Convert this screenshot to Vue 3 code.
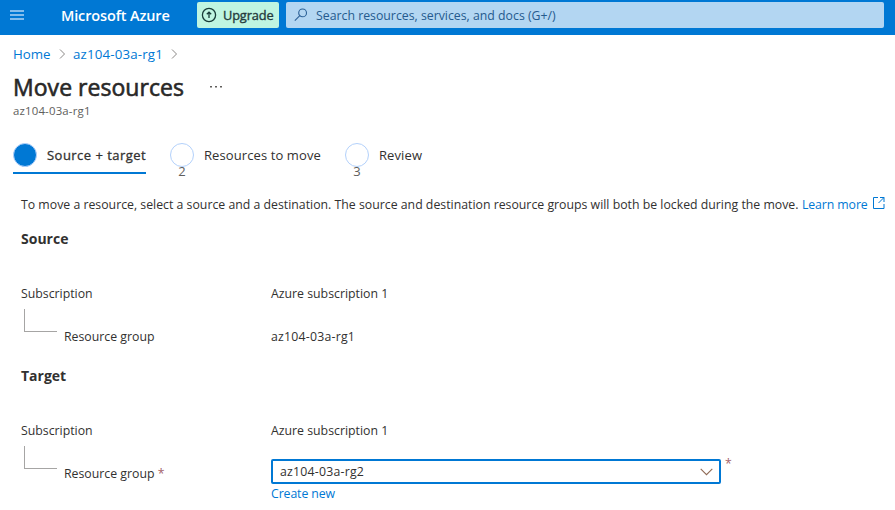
<script setup>
const steps = [
  { label: 'Source + target', number: '', active: true },
  { label: 'Resources to move', number: '2', active: false },
  { label: 'Review', number: '3', active: false },
]
</script>

<template>
  <div class="page">
    <header class="topbar">
      <svg class="menu" width="14" height="10" viewBox="0 0 14 10">
        <path d="M0 1h14M0 5h14M0 9h14" stroke="#84bdec" stroke-width="1.8" />
      </svg>
      <span class="brand">Microsoft Azure</span>
      <button class="upgrade">
        <svg width="16" height="16" viewBox="0 0 16 16" fill="none" stroke="#173b38" stroke-width="1.3">
          <circle cx="8" cy="8" r="6.6" />
          <path d="M8 11V5.5M5.8 7.300 8 5.100l2.200 2.200" />
        </svg>
        <span>Upgrade</span>
      </button>
      <div class="search">
        <svg width="14" height="14" viewBox="0 0 14 14" fill="none" stroke="#2b6096" stroke-width="1.1">
          <circle cx="8.6" cy="4.9" r="3.9" />
          <path d="M5.8 7.7.8 12.7" />
        </svg>
        <span>Search resources, services, and docs (G+/)</span>
      </div>
    </header>

    <nav class="crumbs">
      <a class="home">Home</a>
      <svg width="7" height="10" viewBox="0 0 7 10"><path d="m1 .5 4.5 4.5L1 9.5" fill="none" stroke="#8a8886" /></svg>
      <a class="group">az104-03a-rg1</a>
      <svg width="7" height="10" viewBox="0 0 7 10"><path d="m1 .5 4.5 4.5L1 9.5" fill="none" stroke="#8a8886" /></svg>
    </nav>

    <div class="heading">
      <h1>Move resources</h1>
      <svg width="12" height="3" viewBox="0 0 12 3" fill="#605e5c">
        <path d="M0 0h2v1.5H0zM5 0h2v1.5H5zM10 0h2v1.5h-2z" />
      </svg>
    </div>
    <div class="subtitle">az104-03a-rg1</div>

    <div class="steps">
      <div v-for="(s, i) in steps" :key="i" class="step" :class="['step' + i, { active: s.active }]">
        <span class="dot"><span class="number">{{ s.number }}</span></span>
        <span class="label">{{ s.label }}</span>
      </div>
    </div>

    <main>
      <p class="intro">
        <span class="sentence">To move a resource, select a source and a destination. The source and destination resource groups will both be locked during the move.</span>
        <a>Learn more</a>
        <svg width="12" height="12" viewBox="0 0 12 12" fill="none" stroke="#0078d4">
          <path d="M5 .5H.5v11h10.500V7M7 .5h4V5M11 .5 5.500 6" />
        </svg>
      </p>

      <h2>Source</h2>
      <div class="row">
        <span class="name sub">Subscription</span>
        <span class="value">Azure subscription 1</span>
      </div>
      <div class="row child">
        <span class="elbow"></span>
        <span class="name res">Resource group</span>
        <span class="value rg">az104-03a-rg1</span>
      </div>

      <h2 class="target">Target</h2>
      <div class="row">
        <span class="name sub">Subscription</span>
        <span class="value">Azure subscription 1</span>
      </div>
      <div class="row child">
        <span class="elbow"></span>
        <span class="name res">Resource group <i>*</i></span>
        <div class="field">
          <div class="select">
            <span class="rg">az104-03a-rg2</span>
            <svg width="13" height="8" viewBox="0 0 13 8"><path d="m.7.800 5.800 5.800L12.300.8" fill="none" stroke="#8f6a55" stroke-width="1.1" /></svg>
          </div>
          <a class="create">Create new</a>
        </div>
        <i class="required">*</i>
      </div>
    </main>
  </div>
</template>

<style>
body {
  background: #fff;
  overflow: hidden;
}
</style>

<style scoped>
* {
  box-sizing: border-box;
}
.page {
  width: 895px;
  height: 510px;
  overflow: hidden;
  background: #fff;
  color: #323130;
  font-family: "Open Sans", "Noto Sans", sans-serif;
  font-size: 12.3px;
  white-space: nowrap;
}
svg {
  flex: none;
  display: block;
}
a {
  color: #0078d4;
}
i {
  font-style: normal;
  color: #a4626a;
}
.topbar {
  height: 35px;
  padding: 2px 11px 7px 10px;
  display: flex;
  align-items: stretch;
  background: #0078d4;
}
.menu {
  align-self: center;
}
.brand {
  width: 136px;
  margin-left: 37px;
  color: #fff;
  font-size: 14.5px;
  font-weight: 600;
  line-height: 27px;
  letter-spacing: -0.14px;
}
.upgrade {
  width: 82px;
  height: 26px;
  padding: 0 0 0 4px;
  display: flex;
  align-items: center;
  gap: 6px;
  border: 0;
  border-radius: 2px;
  background: #bff5e1;
  color: #243a3c;
  font: 400 12.8px/26px "Open Sans", sans-serif;
  letter-spacing: -0.15px;
  -webkit-text-stroke: 0.35px currentColor;
}
.search {
  flex: 1;
  height: 26px;
  margin-left: 7px;
  padding-left: 8px;
  display: flex;
  align-items: center;
  gap: 8px;
  border-radius: 2px;
  background: #b3d6f2;
  color: #255a8e;
  font-size: 12.3px;
}
.crumbs {
  height: 37px;
  padding-left: 13px;
  display: flex;
  align-items: center;
  font-size: 13.3px;
}
.crumbs .home {
  width: 46px;
}
.crumbs .group {
  width: 98px;
  margin-left: 7px;
  letter-spacing: 0.16px;
}
.heading {
  height: 30px;
  padding-left: 13px;
  display: flex;
  align-items: center;
}
h1 {
  width: 197px;
  margin: 0;
  font-size: 23px;
  font-weight: 400;
  line-height: 30px;
  letter-spacing: 0.04px;
  color: #292827;
  -webkit-text-stroke: 0.6px currentColor;
}
.subtitle {
  height: 18px;
  padding-left: 13px;
  line-height: 18px;
  font-size: 11.4px;
  letter-spacing: 0.18px;
  color: #605e5c;
}
.steps {
  height: 54px;
  padding: 20px 0 0 13px;
  display: flex;
  gap: 24px;
  font-size: 13px;
}
.step {
  height: 34px;
  display: flex;
  gap: 10px;
}
.step0 {
  width: 133px;
  border-bottom: 2px solid #0078d4;
}
.step1 {
  width: 151px;
}
.dot {
  flex: none;
  width: 24px;
  height: 24px;
  margin-top: 3px;
  border: 1px solid #b3d1fb;
  border-radius: 50%;
  text-align: center;
  color: #605e5c;
}
.active .dot {
  background: #0078d4;
}
.number {
  display: block;
  padding-top: 17px;
  line-height: 20px;
}
.label {
  line-height: 30px;
  letter-spacing: 0.1px;
}
.active .label {
  letter-spacing: 0.47px;
  -webkit-text-stroke: 0.3px currentColor;
}
main {
  padding: 0 0 0 21px;
}
.intro {
  height: 18px;
  margin: 21px 0 0;
  display: flex;
  align-items: center;
}
.sentence {
  width: 781px;
}
.intro a {
  width: 71px;
  letter-spacing: -0.1px;
}
.intro svg {
  margin-top: -2px;
}
h2 {
  height: 20px;
  margin: 16px 0 36px;
  font-size: 14px;
  font-weight: 700;
  line-height: 20px;
}
h2.target {
  margin-top: 21px;
}
.row {
  height: 18px;
  display: flex;
  line-height: 18px;
}
.name {
  width: 250px;
}
.child {
  height: 42px;
  padding-top: 25px;
}
.elbow {
  flex: none;
  width: 33px;
  height: 23px;
  margin: -19px 7px 0 3px;
  border-left: 1px solid #a6a5a4;
  border-bottom: 1px solid #a6a5a4;
}
.child .name {
  width: 207px;
}
.rg {
  letter-spacing: 0.22px;
}
.field {
  width: 450px;
  margin-top: -6px;
}
.select {
  height: 25px;
  padding: 0 6px 0 7px;
  display: flex;
  align-items: center;
  justify-content: space-between;
  border: 2px solid #0078d4;
  border-radius: 2px;
}
.create {
  display: block;
  padding-top: 1px;
  letter-spacing: -0.1px;
}
.required {
  margin: -10px 0 0 4px;
}
</style>
